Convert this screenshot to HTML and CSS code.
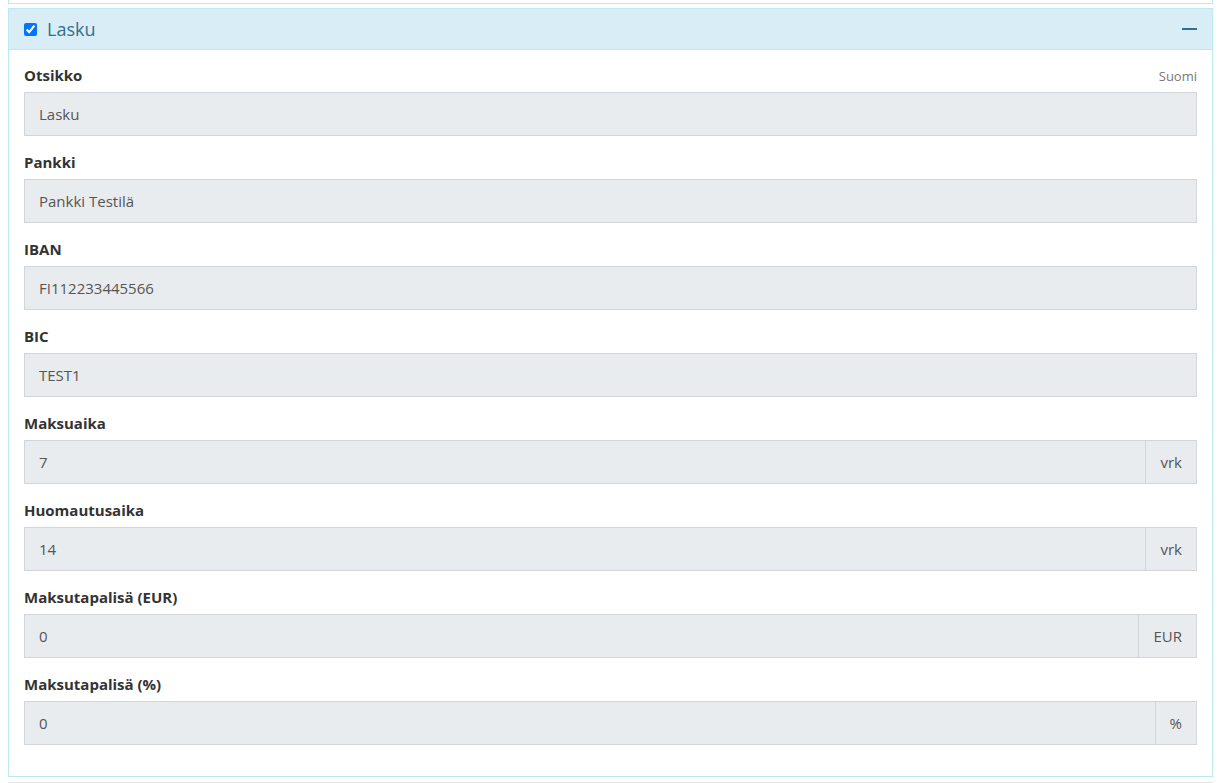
FILE: index.html
```html
<!DOCTYPE html>
<html lang="fi">
<head>
<meta charset="utf-8">
<title>Lasku</title>
<link rel="stylesheet" href="styles.css">
</head>
<body>
<div class="page">
  <div class="panel-prev"></div>
  <section class="panel">
    <header class="panel-heading">
      <label class="panel-title">
        <input type="checkbox" class="toggle" checked>
        <span>Lasku</span>
      </label>
      <span class="collapse-icon" aria-label="Pienennä"></span>
    </header>
    <div class="panel-body">
      <div class="form-group">
        <div class="label-row">
          <label class="field-label">Otsikko</label>
          <span class="lang">Suomi</span>
        </div>
        <div class="input-box"><span class="value">Lasku</span></div>
      </div>
      <div class="form-group">
        <div class="label-row"><label class="field-label">Pankki</label></div>
        <div class="input-box"><span class="value">Pankki Testilä</span></div>
      </div>
      <div class="form-group">
        <div class="label-row"><label class="field-label">IBAN</label></div>
        <div class="input-box"><span class="value">FI112233445566</span></div>
      </div>
      <div class="form-group">
        <div class="label-row"><label class="field-label">BIC</label></div>
        <div class="input-box"><span class="value">TEST1</span></div>
      </div>
      <div class="form-group">
        <div class="label-row"><label class="field-label">Maksuaika</label></div>
        <div class="input-box"><span class="value">7</span><span class="addon">vrk</span></div>
      </div>
      <div class="form-group">
        <div class="label-row"><label class="field-label">Huomautusaika</label></div>
        <div class="input-box"><span class="value">14</span><span class="addon">vrk</span></div>
      </div>
      <div class="form-group">
        <div class="label-row"><label class="field-label">Maksutapalisä (EUR)</label></div>
        <div class="input-box"><span class="value">0</span><span class="addon">EUR</span></div>
      </div>
      <div class="form-group">
        <div class="label-row"><label class="field-label">Maksutapalisä (%)</label></div>
        <div class="input-box"><span class="value">0</span><span class="addon">%</span></div>
      </div>
    </div>
  </section>
  <div class="panel-next"></div>
</div>
</body>
</html>
```

FILE: styles.css
```css
* { box-sizing: border-box; }
html, body { margin: 0; padding: 0; background: #fff; }
body {
  font-family: "Open Sans", "Noto Sans", sans-serif;
  font-size: 15px;
  color: #333;
}
.page {
  margin: 0 5px 0 8px;
  height: 783px;
  overflow: hidden;
}
.panel-prev {
  height: 4px;
  border: 1px solid #bce8f1;
  border-top: 0;
}
.panel {
  margin-top: 4px;
  border: 1px solid #bce8f1;
  background: #fff;
}
.panel-heading {
  height: 41px;
  background: #d9edf7;
  border-bottom: 1px solid #bce8f1;
  display: flex;
  align-items: center;
  justify-content: space-between;
  padding: 0 15px;
}
.panel-title {
  display: flex;
  align-items: center;
  color: #31708f;
  font-size: 18px;
}
.toggle {
  width: 13px;
  height: 13px;
  margin: 0 10px 0 0;
  accent-color: #0075ff;
}
.collapse-icon {
  width: 15px;
  height: 2px;
  background: #31708f;
}
.panel-body {
  padding: 15px 15px 15px;
}
.form-group { margin-bottom: 16px; }
.label-row {
  display: flex;
  justify-content: space-between;
  align-items: baseline;
  height: 20px;
  margin-bottom: 7px;
}
.field-label {
  font-weight: 700;
  font-size: 15px;
  line-height: 20px;
  color: #333;
}
.lang {
  font-size: 13px;
  color: #777;
}
.input-box {
  height: 44px;
  display: flex;
  align-items: stretch;
  background: #e9ecef;
  border: 1px solid #d2d6da;
  color: #555;
  font-size: 15px;
}
.value {
  flex: 1;
  display: flex;
  align-items: center;
  padding-left: 14px;
}
.addon {
  display: flex;
  align-items: center;
  padding: 0 14px;
  border-left: 1px solid #d2d6da;
}
.panel-next {
  margin-top: 5px;
  height: 10px;
  border-top: 2px solid #e3e3e3;
}
```
